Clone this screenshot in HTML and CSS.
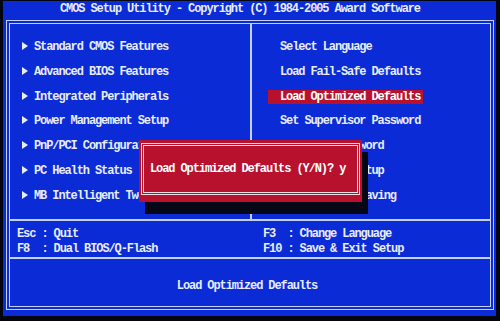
FILE: index.html
```html
<!DOCTYPE html>
<html lang="en">
<head>
    <meta charset="UTF-8">
    <meta name="viewport" content="width=device-width, initial-scale=1.0">
    <title>CMOS Setup Utility</title>
    <link rel="stylesheet" href="styles.css">
</head>
<body>
    <div class="screen">
        <div class="title">CMOS Setup Utility - Copyright (C) 1984-2005 Award Software</div>

        <div class="frame">
            <div class="menus">
                <ul class="menu menu-left">
                    <li>Standard CMOS Features</li>
                    <li>Advanced BIOS Features</li>
                    <li>Integrated Peripherals</li>
                    <li>Power Management Setup</li>
                    <li>PnP/PCI Configurations</li>
                    <li>PC Health Status</li>
                    <li>MB Intelligent Tweaker(M.I.T.)</li>
                </ul>
                <ul class="menu menu-right">
                    <li><span>Select Language</span></li>
                    <li><span>Load Fail-Safe Defaults</span></li>
                    <li><span class="selected">Load Optimized Defaults</span></li>
                    <li><span>Set Supervisor Password</span></li>
                    <li><span>Set User Password</span></li>
                    <li><span>Save &amp; Exit Setup</span></li>
                    <li><span>Exit Without Saving</span></li>
                </ul>
            </div>

            <div class="keys">
                <div>Esc : Quit</div>
                <div>F3  : Change Language</div>
                <div>F8  : Dual BIOS/Q-Flash</div>
                <div>F10 : Save &amp; Exit Setup</div>
            </div>

            <div class="status">Load Optimized Defaults</div>

            <div class="dialog">
                <div class="dialog-inner">Load Optimized Defaults (Y/N)? y</div>
            </div>
        </div>
    </div>
</body>
</html>
```

FILE: styles.css
```css
body {
    margin: 0;
    background-color: #03060f;
    font-family: "Liberation Mono", "DejaVu Sans Mono", monospace;
    font-size: 12px;
    font-weight: bold;
    letter-spacing: -1.1px;
    color: #e8edf8;
}
.screen {
    margin: 1px 4px 0 3px;
    height: 315px;
    padding: 0 2px 6px 3px;
    box-sizing: border-box;
    background-color: #0b2bd6;
}
.title {
    height: 19px;
    line-height: 17px;
    padding-left: 54px;
    white-space: pre;
}
.frame {
    position: relative;
    height: 290px;
    border: 4px double #c4d0f0;
    box-sizing: border-box;
}
.menus {
    display: grid;
    grid-template-columns: 242px 1fr;
    height: 197px;
    border-bottom: 2px solid #c4d0f0;
    box-sizing: border-box;
}
.menu {
    list-style: none;
    margin: 0;
    padding: 11px 0 0 0;
}
.menu li {
    height: 24.8px;
    line-height: 24.8px;
    white-space: pre;
}
.menu-left {
    padding-left: 12px;
    border-right: 2px solid #c4d0f0;
}
.menu-left li::before {
    content: "";
    display: inline-block;
    width: 0;
    height: 0;
    border-left: 6px solid #e8edf8;
    border-top: 4px solid transparent;
    border-bottom: 4px solid transparent;
    margin-right: 6px;
}
.menu-right {
    padding-left: 16px;
}
.menu-right span {
    display: inline-block;
    line-height: 14px;
    padding: 0 3px 0 12px;
}
.menu-right .selected {
    background-color: #b8112e;
    color: #ffffff;
}
.keys {
    display: grid;
    grid-template-columns: 246px 1fr;
    height: 38px;
    padding: 7px 0 0 7px;
    border-bottom: 2px solid #c4d0f0;
    box-sizing: border-box;
}
.keys div {
    line-height: 13px;
    white-space: pre;
}
.status {
    height: 47px;
    padding-top: 21px;
    padding-right: 6px;
    box-sizing: border-box;
    line-height: 13px;
    text-align: center;
    white-space: pre;
}
.dialog {
    position: absolute;
    left: 129px;
    top: 116px;
    width: 223px;
    height: 62px;
    padding: 3px 2px 7px 2px;
    box-sizing: border-box;
    background-color: #b8112e;
    box-shadow: 6px 12px 0 0 #050716;
}
.dialog-inner {
    height: 100%;
    border: 3px double #ecdde4;
    box-sizing: border-box;
    padding-left: 6px;
    line-height: 46px;
    color: #ffffff;
    white-space: pre;
}
```
